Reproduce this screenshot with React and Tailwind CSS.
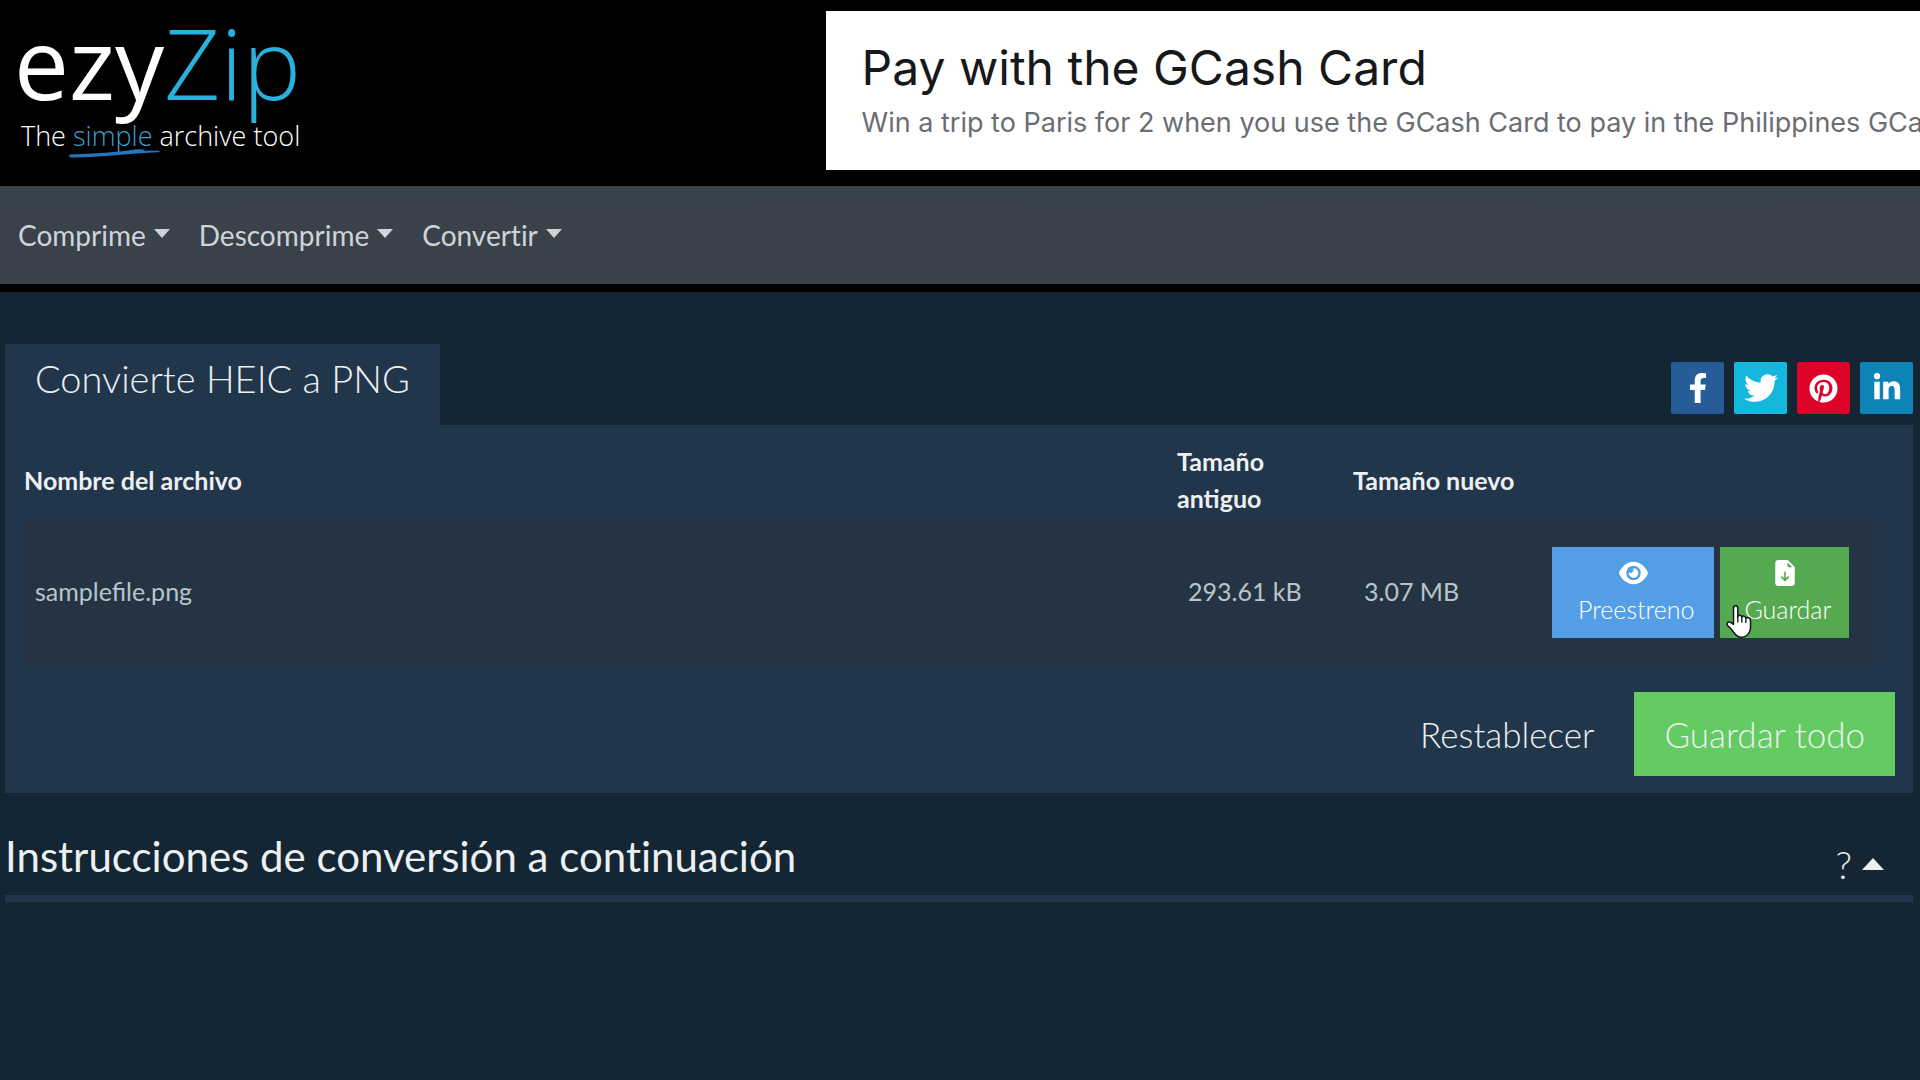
import React from "react";
import { FaEye } from "react-icons/fa6";
import { FaFacebookF, FaTwitter, FaPinterest, FaLinkedinIn } from "react-icons/fa";
import { BsFileEarmarkArrowDownFill } from "react-icons/bs";

const menus = ["Comprime", "Descomprime", "Convertir"];

const networks = [
  { name: "Facebook", Icon: FaFacebookF, bg: "bg-[#265c98]", size: "size-[30px]" },
  { name: "Twitter", Icon: FaTwitter, bg: "bg-[#14b8dc]", size: "size-[34px]" },
  { name: "Pinterest", Icon: FaPinterest, bg: "bg-[#dd0228]", size: "size-[29px]" },
  { name: "LinkedIn", Icon: FaLinkedinIn, bg: "bg-[#0e84b6]", size: "size-[30px]" },
];

const files = [{ name: "samplefile.png", before: "293.61 kB", after: "3.07 MB" }];

function Caret({ className, up = false }) {
  return (
    <svg viewBox="0 0 16 9" className={className} fill="currentColor" preserveAspectRatio="none" aria-hidden="true">
      <path d={up ? "M8 0L16 9H0z" : "M0 0h16L8 9z"} />
    </svg>
  );
}

function Logo() {
  return (
    <a href="#" className="block font-['Open_Sans',sans-serif] text-white">
      <span className="block pt-[2px] pl-[14px] text-[98px] leading-[98px]">
        ezy<span className="font-light text-[#28b1dd]">Zip</span>
      </span>
      <span className="mt-[7px] block pl-[21px] text-[27px] leading-9 font-light">
        The{" "}
        <span className="relative inline-block text-[#3f9fc9]">
          simple
          <svg viewBox="0 0 92 9" className="absolute -bottom-1 -left-1 h-[9px] w-[92px]" aria-hidden="true">
            <path d="M0 5.5C25 5 50 3 66 0.5C74-.3 78 .5 73 1.6L91 1.8L90 3.2C60 4 32 8.6 1 8.4z" fill="#2377bd" />
          </svg>
        </span>{" "}
        archive tool
      </span>
    </a>
  );
}

function HandCursor() {
  return (
    <svg viewBox="0 0 26 35" className="pointer-events-none absolute top-[57px] left-[6px] h-[35px] w-[26px]" aria-hidden="true">
      <path
        d="M7.5 4.2C7.5 1 11.8 1 11.8 4.2V13C12.2 10.6 15.6 10.8 15.8 13.2C16.6 11.4 19.6 11.8 19.9 14.3C21 12.9 24.4 13.5 24.5 16.4V23.5C24.5 27 23 29.5 20.5 31.6C17.5 33.9 13 33.8 10.4 31.4C7.6 28.7 5.6 25 2.2 22.2C-.3 20 1.8 17 4.6 18.4L7.5 20.4z"
        fill="#fff"
        stroke="#10181c"
        strokeWidth="1.5"
        strokeLinejoin="round"
      />
      <path d="M11.8 12.5V18M15.8 13.5V18M19.9 14.5V18.5" fill="none" stroke="#10181c" strokeWidth="1.3" strokeLinecap="round" />
    </svg>
  );
}

export default function App() {
  return (
    <div className="min-h-screen overflow-hidden bg-[#142533] font-['Lato',sans-serif] text-[#ecf0f1]">
      <header className="flex items-start bg-black pt-[11px] pb-4">
        <div className="w-[43%] shrink-0">
          <Logo />
        </div>
        <a href="#" className="block h-[159px] min-w-0 flex-1 overflow-hidden bg-white pt-7 pl-9 font-['Inter',sans-serif] whitespace-nowrap">
          <span className="block text-5xl leading-[58px] text-[#17181a]">Pay with the GCash Card</span>
          <span className="mt-2 block text-[27px] leading-9 text-[#6a6e73]">
            Win a trip to Paris for 2 when you use the GCash Card to pay in the Philippines GCash
          </span>
        </a>
      </header>

      <nav className="flex h-[106px] items-center gap-[29px] border-b-8 border-black bg-linear-to-b from-[#39434b] to-[#3a404a] pl-[18px] [font-variant-ligatures:no-common-ligatures]">
        {menus.map((label) => (
          <button key={label} type="button" className="flex items-center gap-2 text-[28px] leading-9 text-[#cfd4d8]">
            {label}
            <Caret className="mb-1 h-[9px] w-4" />
          </button>
        ))}
      </nav>

      <main className="pt-[52px] pr-[7px] pl-[5px]">
        <div className="flex items-end justify-between">
          <h1 className="h-[81px] bg-[#21364b] px-[30px] pt-[11px] text-[38px] leading-[46px] font-light">Convierte HEIC a PNG</h1>
          <div className="mb-[11px] flex gap-[10px]">
            {networks.map(({ name, Icon, bg, size }) => (
              <a key={name} href="#" aria-label={name} className={`flex h-[52px] w-[53px] items-center justify-center rounded-xs text-white ${bg}`}>
                <Icon className={size} />
              </a>
            ))}
          </div>
        </div>

        <section className="bg-[#21364b] pb-[17px]">
          <div className="pr-[38px] pl-[19px]">
            <table className="w-full table-fixed border-collapse text-left text-[25px] leading-[37px]">
              <colgroup>
                <col />
                <col className="w-[176px]" />
                <col className="w-[188px]" />
                <col className="w-[334px]" />
              </colgroup>
              <thead>
                <tr className="font-bold">
                  <th scope="col" className="pt-[18px] pb-[3px]">Nombre del archivo</th>
                  <th scope="col" className="pt-[18px] pr-8 pb-[3px]">Tamaño antiguo</th>
                  <th scope="col" className="pt-[18px] pb-[3px]">Tamaño nuevo</th>
                  <td />
                </tr>
              </thead>
              <tbody>
                {files.map((f) => (
                  <tr key={f.name} className="bg-[#243442] text-[#b9c4cd]">
                    <td className="px-[11px] pb-[2px]">{f.name}</td>
                    <td className="px-[11px] pb-[2px]">{f.before}</td>
                    <td className="px-[11px] pb-[2px]">{f.after}</td>
                    <td className="py-[27px] pl-[11px]">
                      <div className="flex gap-[6px] leading-[37px] font-light text-white">
                        <button type="button" className="flex h-[91px] flex-col items-center justify-center bg-[#549ee5] px-5 pb-[2px]">
                          <span className="flex h-9 items-center"><FaEye className="h-[26px] w-[29px]" /></span>
                          <span className="pl-[6px]">Preestreno</span>
                        </button>
                        <button type="button" className="relative flex h-[91px] flex-col items-center justify-center bg-[#55a951] px-[18px] pb-[2px]">
                          <span className="flex h-9 items-center"><BsFileEarmarkArrowDownFill className="size-[26px]" /></span>
                          <span className="pl-[6px]">Guardar</span>
                          <HandCursor />
                        </button>
                      </div>
                    </td>
                  </tr>
                ))}
              </tbody>
            </table>
          </div>
          <div className="mt-[27px] flex justify-end gap-[10px] pr-[18px] text-[35px] leading-[84px] font-light">
            <button type="button" className="px-[30px]">Restablecer</button>
            <button type="button" className="bg-[#63cb61] px-[30px]">Guardar todo</button>
          </div>
        </section>

        <section className="flex items-end justify-between border-b-[7px] border-[#21364b] pt-[36px] pr-[29px] pb-3">
          <h2 className="text-[42px] leading-[54px] [font-variant-ligatures:no-common-ligatures]">Instrucciones de conversión a continuación</h2>
          <button type="button" aria-label="Mostrar ayuda" className="flex items-center gap-[10px] text-[38px] leading-[38px] font-light">
            ?
            <Caret up className="h-3 w-[22px]" />
          </button>
        </section>
      </main>
    </div>
  );
}
